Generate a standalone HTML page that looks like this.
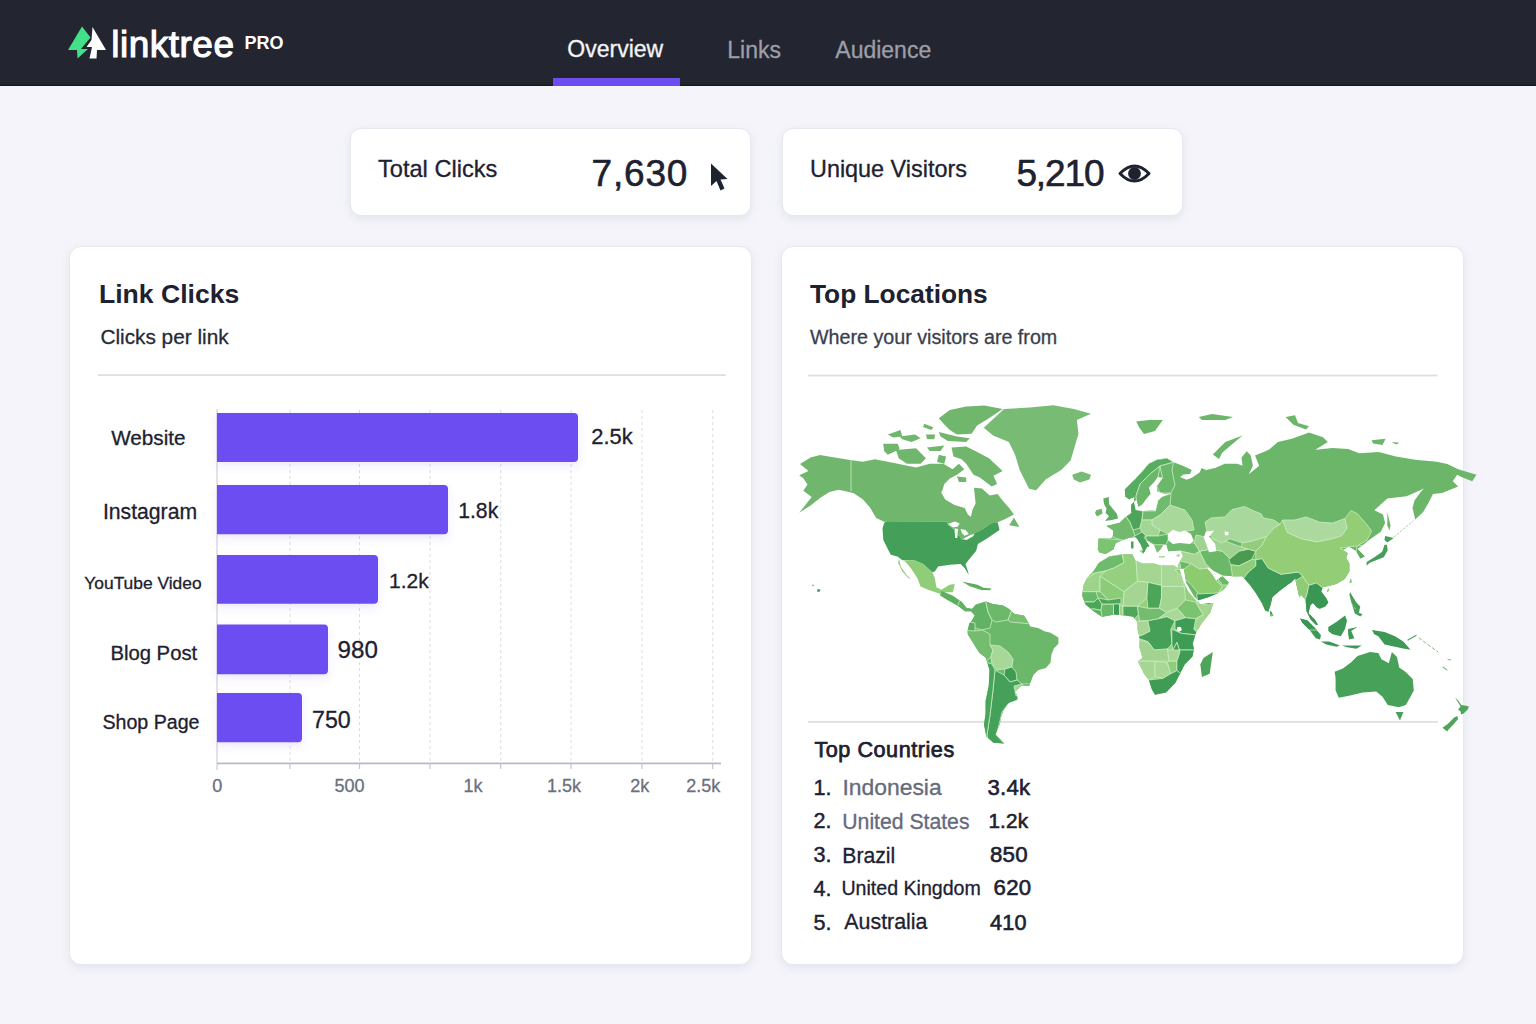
<!DOCTYPE html>
<html><head><meta charset="utf-8"><style>
html,body{margin:0;padding:0;}
body{width:1536px;height:1024px;overflow:hidden;position:relative;background:#f4f4fa;font-family:"Liberation Sans",sans-serif;}
.t{position:absolute;line-height:1;white-space:nowrap;}
.nav{position:absolute;left:0;top:0;width:1536px;height:86px;background:#232631;box-shadow:inset 0 -1.5px 0 #161820;}
.card{position:absolute;background:#ffffff;border-radius:12px;border:1px solid #e8e8ef;box-shadow:0 3px 8px rgba(90,90,140,0.10);box-sizing:border-box;}
svg{position:absolute;left:0;top:0;}
</style></head><body>
<div class="nav"></div>
<div style="position:absolute;left:553px;top:78px;width:127px;height:8px;background:#6d4cf0;"></div>
<div class="card" style="left:350px;top:128px;width:401px;height:88px;border-radius:11px;"></div>
<div class="card" style="left:782px;top:128px;width:401px;height:88px;border-radius:11px;"></div>
<div class="card" style="left:69px;top:246px;width:683px;height:719px;"></div>
<div class="card" style="left:781px;top:246px;width:683px;height:719px;"></div>
<svg width="1536" height="1024" viewBox="0 0 1536 1024">
<defs><filter id="bs" x="-10%" y="-30%" width="120%" height="170%"><feDropShadow dx="0" dy="4" stdDeviation="4" flood-color="#6c4df2" flood-opacity="0.12"/></filter></defs>
<!-- logo -->
<path d="M82 26.5 L90.5 37.5 L81 49 L88 49 L77.5 58.5 L77 50 L68 50 Z" fill="#43e08a"/>
<path d="M92.5 27 L106 50 L97 50 L96.5 58.5 L89.5 58.5 L92 47 L86.5 47 L91.5 40 Z" fill="#ffffff"/>
<!-- cursor -->
<path d="M711 163.5 L711 186 L716.5 181 L720.5 190.5 L724.5 188.5 L720.5 179.5 L727.5 179 Z" fill="#1f2330"/>
<!-- eye -->
<path d="M1120 173.5 Q1134.5 158.3 1149 173.5 Q1134.5 188.7 1120 173.5 Z" fill="none" stroke="#1f2330" stroke-width="3" stroke-linejoin="round"/>
<circle cx="1134.5" cy="173.5" r="6.4" fill="#1f2330"/>
<!-- dividers -->
<rect x="98" y="374.2" width="627.6" height="1.8" fill="#dedee4"/>
<rect x="808" y="374.6" width="629.5" height="1.8" fill="#dedee4"/>
<rect x="808" y="721" width="629.8" height="1.8" fill="#dedee4"/>
<!-- chart -->
<line x1="290" y1="410" x2="290" y2="763" stroke="#dcdce4" stroke-width="1" stroke-dasharray="3 3"/><line x1="290" y1="763" x2="290" y2="769" stroke="#c4c5cf" stroke-width="1.2"/><line x1="359.5" y1="410" x2="359.5" y2="763" stroke="#dcdce4" stroke-width="1" stroke-dasharray="3 3"/><line x1="359.5" y1="763" x2="359.5" y2="769" stroke="#c4c5cf" stroke-width="1.2"/><line x1="430" y1="410" x2="430" y2="763" stroke="#dcdce4" stroke-width="1" stroke-dasharray="3 3"/><line x1="430" y1="763" x2="430" y2="769" stroke="#c4c5cf" stroke-width="1.2"/><line x1="500.7" y1="410" x2="500.7" y2="763" stroke="#dcdce4" stroke-width="1" stroke-dasharray="3 3"/><line x1="500.7" y1="763" x2="500.7" y2="769" stroke="#c4c5cf" stroke-width="1.2"/><line x1="571" y1="410" x2="571" y2="763" stroke="#dcdce4" stroke-width="1" stroke-dasharray="3 3"/><line x1="571" y1="763" x2="571" y2="769" stroke="#c4c5cf" stroke-width="1.2"/><line x1="642" y1="410" x2="642" y2="763" stroke="#dcdce4" stroke-width="1" stroke-dasharray="3 3"/><line x1="642" y1="763" x2="642" y2="769" stroke="#c4c5cf" stroke-width="1.2"/><line x1="712.7" y1="410" x2="712.7" y2="763" stroke="#dcdce4" stroke-width="1" stroke-dasharray="3 3"/><line x1="712.7" y1="763" x2="712.7" y2="769" stroke="#c4c5cf" stroke-width="1.2"/>
<line x1="217" y1="409" x2="217" y2="770" stroke="#cfd0d8" stroke-width="1.2"/>
<rect x="217" y="762.5" width="504" height="1.8" fill="#babbc7"/>
<path d="M217 413 H574 Q578 413 578 417 V458 Q578 462 574 462 H217 Z" fill="#6c4df2" filter="url(#bs)"/><path d="M217 485 H444 Q448 485 448 489 V530.2 Q448 534.2 444 534.2 H217 Z" fill="#6c4df2" filter="url(#bs)"/><path d="M217 555 H374 Q378 555 378 559 V599.8 Q378 603.8 374 603.8 H217 Z" fill="#6c4df2" filter="url(#bs)"/><path d="M217 624.6 H324 Q328 624.6 328 628.6 V670.2 Q328 674.2 324 674.2 H217 Z" fill="#6c4df2" filter="url(#bs)"/><path d="M217 693 H298 Q302 693 302 697 V738.3 Q302 742.3 298 742.3 H217 Z" fill="#6c4df2" filter="url(#bs)"/>
<clipPath id="land"><path d="M800.0 464.0 L810.6 457.5 L820.0 455.0 L834.6 457.5 L850.2 460.0 L862.7 461.7 L875.0 459.2 L897.8 463.8 L916.0 467.5 L929.7 463.8 L943.4 463.8 L952.5 469.3 L958.9 463.8 L964.3 469.3 L957.0 474.8 L949.8 478.4 L944.3 483.9 L942.5 490.0 L941.2 492.5 L945.2 499.5 L954.5 505.0 L964.7 508.1 L967.8 514.4 L970.9 516.7 L972.5 509.7 L975.6 503.4 L974.0 487.8 L981.9 488.6 L989.7 495.6 L997.5 494.0 L1003.8 501.9 L1009.2 508.1 L1013.9 514.4 L1005.3 519.0 L995.9 523.0 L991.2 523.3 L982.9 529.1 L972.9 534.1 L968.0 537.4 L962.1 539.9 L958.8 534.9 L955.5 538.2 L954.7 530.0 L948.0 525.0 L947.2 521.6 L885.8 521.2 L884.6 522.1 L876.2 517.9 L870.0 507.5 L862.7 499.2 L853.3 492.9 L838.8 489.8 L829.4 491.9 L820.0 498.1 L810.6 505.4 L799.2 512.7 L811.7 497.1 L803.3 490.8 L807.5 484.6 L803.3 478.3 L799.2 475.2 L808.5 471.0 Z M1009.2 525.3 L1013.9 517.5 L1019.4 526.9 Z M885.8 521.2 L947.2 521.6 L948.0 525.0 L954.7 530.0 L955.5 538.2 L958.8 534.9 L962.1 539.9 L968.0 537.4 L972.9 534.1 L982.9 529.1 L991.2 523.3 L997.8 522.5 L999.5 530.0 L986.2 539.1 L977.9 544.0 L976.2 550.7 L968.8 559.8 L965.5 564.0 L968.0 571.4 L968.8 574.8 L964.6 568.1 L960.5 564.0 L949.7 564.8 L938.1 566.5 L934.8 571.4 L932.3 572.3 L923.1 564.0 L914.8 560.6 L902.4 560.2 L897.4 556.5 L890.8 554.8 L887.4 548.2 L883.3 539.9 L882.5 528.3 L884.1 523.3 Z M904.0 560.6 L914.8 560.6 L923.1 564.0 L932.3 572.3 L934.8 578.1 L936.4 587.2 L941.4 589.7 L949.7 584.7 L954.7 583.9 L953.0 592.2 L946.4 592.2 L939.7 593.8 L928.1 589.7 L920.6 586.4 L917.3 578.1 L910.7 568.1 L906.5 563.1 Z M899.0 558.2 L900.7 566.5 L906.5 574.8 L910.7 578.9 L908.2 578.1 L902.4 571.4 L898.2 563.1 Z M941.6 590.9 L952.5 595.6 L961.9 601.9 L966.6 608.1 L972.8 608.9 L974.4 611.2 L965.0 611.2 L958.8 606.6 L947.8 600.3 L940.0 595.6 Z M961.9 581.6 L977.5 584.7 L986.9 589.4 L982.2 590.2 L969.7 586.2 Z M983.8 587.8 L991.6 588.6 L990.0 590.2 L983.0 590.0 Z M938.8 418.2 L949.8 410.0 L966.2 406.4 L984.4 405.5 L1002.6 409.1 L989.0 418.2 L977.1 425.5 L971.6 433.7 L957.0 434.6 L949.8 430.0 L944.3 424.6 Z M938.8 431.9 L957.0 436.5 L969.8 438.3 L966.2 441.9 L947.9 441.0 L940.6 436.5 Z M887.8 434.6 L900.5 430.0 L902.3 436.5 L893.2 437.4 Z M899.6 436.5 L915.1 434.6 L920.6 438.3 L911.5 441.9 L902.3 439.2 Z M924.2 423.7 L933.3 427.3 L931.5 430.0 L923.0 427.0 Z M926.0 434.6 L935.2 434.6 L934.2 439.2 L927.0 439.0 Z M883.2 443.8 L897.8 443.8 L899.6 449.2 L887.8 454.7 L884.1 451.0 Z M896.0 450.1 L916.0 448.3 L926.0 458.3 L920.6 463.8 L906.9 463.8 L898.7 458.3 Z M927.0 447.4 L944.3 445.6 L940.6 451.0 L929.7 451.0 Z M938.8 454.7 L946.1 456.5 L944.3 463.8 L937.0 462.0 Z M951.6 447.4 L966.2 446.5 L975.3 451.0 L989.0 458.3 L1002.6 471.1 L993.5 475.7 L997.1 483.9 L991.7 486.6 L979.8 477.5 L973.5 474.8 L966.2 463.8 L961.6 459.2 L953.4 456.5 Z M957.0 476.6 L966.2 477.5 L966.2 482.0 L958.9 482.0 Z M983.8 427.8 L1004.0 409.0 L1030.0 407.5 L1053.4 405.2 L1073.8 409.0 L1091.0 413.8 L1076.9 420.0 L1078.4 434.0 L1073.8 449.7 L1070.6 460.6 L1061.2 470.0 L1045.6 479.4 L1036.2 490.3 L1029.0 488.8 L1019.7 470.0 L1015.0 454.4 L1008.8 441.9 L993.1 435.6 Z M1072.2 474.7 L1081.6 471.6 L1091.0 474.7 L1089.4 479.4 L1080.0 482.5 L1073.8 479.4 Z M1136.2 421.6 L1148.8 420.0 L1162.8 420.0 L1155.0 431.0 L1144.0 434.0 L1139.4 427.8 Z M1212.8 454.4 L1225.3 441.9 L1242.5 435.6 L1233.0 443.4 L1222.2 452.8 L1219.0 459.0 Z M1103.3 498.6 L1108.8 497.0 L1109.0 504.0 L1113.0 509.0 L1117.0 514.0 L1118.0 518.5 L1112.0 520.0 L1105.0 521.0 L1109.0 516.0 L1105.5 513.0 L1106.5 508.5 L1104.0 504.0 Z M1096.2 510.3 L1101.7 508.8 L1102.5 513.4 L1097.0 516.6 L1095.0 513.0 Z M1099.4 552.5 L1097.8 549.4 L1098.6 538.4 L1110.0 538.6 L1112.7 536.9 L1113.4 530.6 L1106.4 526.0 L1119.7 522.8 L1126.0 516.6 L1131.0 513.0 L1131.3 504.5 L1133.9 501.9 L1134.5 496.7 L1129.3 499.3 L1125.4 496.7 L1124.8 489.5 L1134.5 479.7 L1142.3 471.3 L1148.9 463.5 L1157.3 459.6 L1167.0 458.2 L1173.6 462.2 L1183.4 466.0 L1191.8 470.0 L1189.9 473.9 L1183.4 474.5 L1180.1 477.1 L1186.6 479.7 L1191.8 477.8 L1199.6 472.6 L1201.6 468.0 L1206.1 470.0 L1215.0 468.0 L1224.8 463.8 L1237.3 463.8 L1242.5 465.8 L1241.5 457.5 L1246.7 451.2 L1250.8 455.4 L1252.9 465.8 L1248.8 474.2 L1259.2 465.8 L1255.0 455.4 L1265.4 451.2 L1269.6 449.2 L1277.8 441.9 L1291.9 438.8 L1309.0 432.5 L1323.1 437.2 L1327.8 441.9 L1315.3 449.7 L1332.5 448.1 L1348.1 448.9 L1359.3 453.2 L1378.7 452.1 L1395.9 456.4 L1415.2 459.7 L1436.7 461.8 L1447.4 464.0 L1458.2 469.3 L1476.5 474.7 L1472.2 481.2 L1461.4 476.9 L1457.1 474.7 L1452.8 481.2 L1458.2 486.5 L1442.1 493.0 L1433.0 494.0 L1428.0 503.7 L1423.0 512.3 L1415.2 519.5 L1412.5 508.0 L1414.5 500.6 L1420.7 492.0 L1424.0 488.5 L1406.6 496.2 L1387.3 498.4 L1374.4 510.2 L1383.0 514.5 L1385.1 523.1 L1380.8 531.7 L1370.1 539.2 L1363.6 544.6 L1357.2 548.8 L1364.7 556.4 L1360.4 558.5 L1356.1 551.0 L1348.6 546.7 L1343.2 550.0 L1347.8 553.3 L1346.2 558.0 L1349.4 563.4 L1349.4 571.2 L1344.7 579.0 L1336.9 583.8 L1329.0 586.1 L1322.8 586.9 L1321.2 591.6 L1326.0 597.8 L1328.3 602.5 L1325.2 606.4 L1319.7 608.8 L1316.6 607.2 L1313.0 603.0 L1310.5 605.0 L1308.5 613.3 L1314.8 619.6 L1318.0 624.8 L1315.8 624.8 L1310.6 619.6 L1306.5 611.2 L1305.6 600.0 L1301.0 594.7 L1299.4 597.8 L1296.2 583.8 L1295.4 578.3 L1291.2 582.5 L1288.0 584.6 L1279.8 590.8 L1272.5 597.0 L1270.4 605.4 L1268.3 611.7 L1265.2 610.6 L1262.0 603.3 L1255.8 593.0 L1249.6 584.6 L1242.3 576.2 L1233.0 576.2 L1222.5 575.2 L1214.0 571.0 L1210.0 568.0 L1205.8 567.0 L1212.0 574.2 L1216.2 580.4 L1222.5 576.2 L1228.8 582.5 L1224.6 588.8 L1218.3 593.0 L1209.0 597.0 L1198.5 600.2 L1194.4 597.0 L1186.0 582.5 L1184.0 569.0 L1179.2 568.8 L1177.7 565.8 L1180.0 561.0 L1183.0 556.5 L1180.8 550.2 L1168.3 551.2 L1166.6 544.7 L1163.4 544.7 L1160.3 549.4 L1157.2 552.5 L1154.0 544.7 L1146.2 540.0 L1144.0 537.5 L1149.4 546.2 L1147.0 547.0 L1143.9 552.5 L1140.8 544.7 L1136.9 538.4 L1135.3 536.9 L1129.0 537.7 L1121.2 540.8 L1115.8 543.0 L1113.4 549.4 L1105.6 554.0 Z M1099.0 562.5 L1109.4 556.2 L1121.9 554.2 L1132.3 554.2 L1135.4 560.4 L1142.7 563.5 L1154.2 563.5 L1160.4 565.6 L1174.0 565.6 L1179.2 568.8 L1183.3 581.2 L1188.5 591.7 L1194.8 599.0 L1200.0 604.2 L1213.5 603.1 L1210.4 612.5 L1202.0 622.9 L1195.8 633.3 L1192.7 643.8 L1194.0 648.8 L1192.5 656.6 L1184.7 664.4 L1180.0 673.8 L1175.3 683.1 L1166.0 692.5 L1155.0 694.8 L1151.9 689.4 L1148.8 680.0 L1144.0 673.8 L1137.8 661.2 L1142.5 658.0 L1139.4 647.2 L1139.6 638.5 L1137.5 629.2 L1137.5 622.9 L1133.3 616.7 L1125.0 615.6 L1114.6 614.6 L1102.0 616.7 L1092.7 610.4 L1085.4 604.2 L1082.3 595.8 L1083.3 585.4 L1087.5 577.0 L1093.8 570.8 Z M1212.8 651.9 L1209.7 673.8 L1201.9 676.9 L1200.3 664.4 L1203.4 658.0 Z M1270.4 610.6 L1273.5 615.8 L1270.0 616.5 Z M1350.9 578.3 L1351.7 582.2 L1349.4 583.0 Z M1328.3 587.7 L1329.0 590.8 L1326.7 592.3 Z M1386.9 544.7 L1387.7 550.2 L1383.8 557.2 L1376.0 560.3 L1369.7 562.7 L1366.6 565.8 L1366.6 561.9 L1374.4 557.2 L1382.2 551.7 L1384.5 544.7 Z M1385.1 536.0 L1393.7 538.1 L1387.3 542.4 L1384.5 540.0 Z M1387.3 512.3 L1390.5 525.2 L1389.4 530.6 L1387.3 525.2 Z M1350.2 592.3 L1352.5 596.2 L1356.4 602.5 L1360.3 606.4 L1358.8 612.7 L1362.7 614.2 L1360.3 616.6 L1354.8 613.4 L1351.0 601.0 L1349.4 594.7 Z M1300.2 618.5 L1307.5 620.6 L1315.8 629.0 L1321.0 635.2 L1320.0 639.4 L1315.8 638.3 L1309.6 630.0 L1302.3 622.7 Z M1321.0 641.5 L1329.4 641.5 L1339.8 645.6 L1336.7 646.7 L1326.2 644.6 Z M1341.9 645.6 L1353.3 645.6 L1361.7 645.6 L1356.5 648.8 L1347.0 647.2 Z M1328.3 626.9 L1336.7 621.7 L1345.0 615.4 L1347.0 620.6 L1345.0 629.0 L1340.8 636.2 L1332.5 634.2 L1328.3 631.0 Z M1348.1 629.0 L1357.5 626.9 L1351.2 631.0 L1354.4 638.3 L1349.2 639.4 L1348.1 634.2 Z M1372.0 630.0 L1384.6 632.1 L1395.0 636.2 L1403.3 641.5 L1410.6 649.8 L1404.4 648.8 L1395.0 646.7 L1384.6 644.6 L1378.3 636.2 L1374.2 634.2 Z M1334.6 671.7 L1342.9 668.5 L1351.2 662.3 L1357.5 656.0 L1370.0 651.9 L1378.3 652.9 L1381.5 659.2 L1388.8 663.3 L1391.9 651.9 L1397.0 657.1 L1399.2 667.5 L1405.4 671.7 L1412.7 679.0 L1413.8 690.4 L1411.2 695.6 L1405.8 705.0 L1398.8 707.3 L1387.8 705.0 L1382.5 696.7 L1376.2 691.5 L1362.7 692.5 L1350.2 695.6 L1338.8 697.7 L1335.6 690.4 L1335.6 677.9 Z M1395.6 712.0 L1403.4 712.0 L1400.0 720.6 Z M1455.0 697.2 L1458.1 700.3 L1461.2 705.0 L1466.0 705.8 L1469.0 706.6 L1467.5 709.7 L1463.6 713.6 L1461.2 714.4 L1460.5 711.2 L1458.1 709.7 L1460.5 706.6 L1457.3 701.1 Z M1457.3 716.0 L1458.1 719.0 L1453.4 724.5 L1448.8 729.2 L1447.2 731.6 L1442.5 727.7 L1448.0 723.8 L1454.2 717.5 Z M960.0 606.2 L967.8 609.4 L971.7 609.4 L975.6 604.7 L985.8 601.6 L992.8 603.9 L1003.0 605.5 L1008.4 608.6 L1014.7 614.0 L1024.0 615.6 L1028.0 621.9 L1030.3 626.6 L1038.1 628.1 L1044.4 631.2 L1050.6 632.8 L1058.4 637.5 L1058.4 643.8 L1053.8 648.4 L1051.4 654.7 L1050.6 662.5 L1045.9 668.0 L1038.1 670.3 L1033.4 675.0 L1029.4 685.6 L1021.6 685.6 L1014.5 691.9 L1016.9 695.0 L1017.7 699.7 L1009.0 702.8 L1007.5 704.4 L1003.6 710.6 L1001.2 716.9 L999.7 724.7 L995.8 734.0 L1004.4 743.4 L993.4 742.7 L986.4 736.4 L984.0 724.7 L985.6 713.8 L985.6 701.2 L988.8 685.6 L989.5 670.0 L985.8 657.8 L979.5 653.1 L975.6 646.9 L971.7 640.6 L967.8 634.4 L967.8 629.7 L969.4 623.4 L971.0 621.9 L974.8 615.6 L969.4 609.4 Z M1285.6 416.9 L1295.0 415.3 L1298.0 423.0 L1309.0 426.2 L1306.0 429.4 L1293.4 424.7 Z M1371.6 440.3 L1385.6 438.8 L1382.5 445.0 L1373.0 443.4 Z M1391.9 441.9 L1399.7 442.7 L1396.0 444.5 Z M1198.8 416.9 L1212.0 414.0 L1233.0 416.9 L1225.3 420.0 L1201.9 420.0 Z M1131.0 541.5 L1133.5 541.5 L1133.5 548.5 L1131.0 548.5 Z M1139.5 550.5 L1145.0 551.0 L1143.0 553.5 Z M1159.0 556.0 L1165.0 556.0 L1164.0 557.3 L1159.0 557.3 Z M1176.0 555.0 L1180.0 554.6 L1178.5 557.0 Z M817.5 589.0 L820.5 589.5 L819.5 592.0 L817.0 591.5 Z M812.0 584.5 L814.0 585.0 L813.0 586.5 Z"/></clipPath>
<path d="M800.0 464.0 L810.6 457.5 L820.0 455.0 L834.6 457.5 L850.2 460.0 L862.7 461.7 L875.0 459.2 L897.8 463.8 L916.0 467.5 L929.7 463.8 L943.4 463.8 L952.5 469.3 L958.9 463.8 L964.3 469.3 L957.0 474.8 L949.8 478.4 L944.3 483.9 L942.5 490.0 L941.2 492.5 L945.2 499.5 L954.5 505.0 L964.7 508.1 L967.8 514.4 L970.9 516.7 L972.5 509.7 L975.6 503.4 L974.0 487.8 L981.9 488.6 L989.7 495.6 L997.5 494.0 L1003.8 501.9 L1009.2 508.1 L1013.9 514.4 L1005.3 519.0 L995.9 523.0 L991.2 523.3 L982.9 529.1 L972.9 534.1 L968.0 537.4 L962.1 539.9 L958.8 534.9 L955.5 538.2 L954.7 530.0 L948.0 525.0 L947.2 521.6 L885.8 521.2 L884.6 522.1 L876.2 517.9 L870.0 507.5 L862.7 499.2 L853.3 492.9 L838.8 489.8 L829.4 491.9 L820.0 498.1 L810.6 505.4 L799.2 512.7 L811.7 497.1 L803.3 490.8 L807.5 484.6 L803.3 478.3 L799.2 475.2 L808.5 471.0 Z" fill="#70b66d"/>
<path d="M1009.2 525.3 L1013.9 517.5 L1019.4 526.9 Z" fill="#70b66d"/>
<path d="M885.8 521.2 L947.2 521.6 L948.0 525.0 L954.7 530.0 L955.5 538.2 L958.8 534.9 L962.1 539.9 L968.0 537.4 L972.9 534.1 L982.9 529.1 L991.2 523.3 L997.8 522.5 L999.5 530.0 L986.2 539.1 L977.9 544.0 L976.2 550.7 L968.8 559.8 L965.5 564.0 L968.0 571.4 L968.8 574.8 L964.6 568.1 L960.5 564.0 L949.7 564.8 L938.1 566.5 L934.8 571.4 L932.3 572.3 L923.1 564.0 L914.8 560.6 L902.4 560.2 L897.4 556.5 L890.8 554.8 L887.4 548.2 L883.3 539.9 L882.5 528.3 L884.1 523.3 Z" fill="#44a058"/>
<path d="M904.0 560.6 L914.8 560.6 L923.1 564.0 L932.3 572.3 L934.8 578.1 L936.4 587.2 L941.4 589.7 L949.7 584.7 L954.7 583.9 L953.0 592.2 L946.4 592.2 L939.7 593.8 L928.1 589.7 L920.6 586.4 L917.3 578.1 L910.7 568.1 L906.5 563.1 Z" fill="#8fcd78"/>
<path d="M899.0 558.2 L900.7 566.5 L906.5 574.8 L910.7 578.9 L908.2 578.1 L902.4 571.4 L898.2 563.1 Z" fill="#8fcd78"/>
<path d="M941.6 590.9 L952.5 595.6 L961.9 601.9 L966.6 608.1 L972.8 608.9 L974.4 611.2 L965.0 611.2 L958.8 606.6 L947.8 600.3 L940.0 595.6 Z" fill="#5eae60"/>
<path d="M961.9 581.6 L977.5 584.7 L986.9 589.4 L982.2 590.2 L969.7 586.2 Z" fill="#5eae60"/>
<path d="M983.8 587.8 L991.6 588.6 L990.0 590.2 L983.0 590.0 Z" fill="#5eae60"/>
<path d="M938.8 418.2 L949.8 410.0 L966.2 406.4 L984.4 405.5 L1002.6 409.1 L989.0 418.2 L977.1 425.5 L971.6 433.7 L957.0 434.6 L949.8 430.0 L944.3 424.6 Z" fill="#70b66d"/>
<path d="M938.8 431.9 L957.0 436.5 L969.8 438.3 L966.2 441.9 L947.9 441.0 L940.6 436.5 Z" fill="#70b66d"/>
<path d="M887.8 434.6 L900.5 430.0 L902.3 436.5 L893.2 437.4 Z" fill="#70b66d"/>
<path d="M899.6 436.5 L915.1 434.6 L920.6 438.3 L911.5 441.9 L902.3 439.2 Z" fill="#70b66d"/>
<path d="M924.2 423.7 L933.3 427.3 L931.5 430.0 L923.0 427.0 Z" fill="#70b66d"/>
<path d="M926.0 434.6 L935.2 434.6 L934.2 439.2 L927.0 439.0 Z" fill="#70b66d"/>
<path d="M883.2 443.8 L897.8 443.8 L899.6 449.2 L887.8 454.7 L884.1 451.0 Z" fill="#70b66d"/>
<path d="M896.0 450.1 L916.0 448.3 L926.0 458.3 L920.6 463.8 L906.9 463.8 L898.7 458.3 Z" fill="#70b66d"/>
<path d="M927.0 447.4 L944.3 445.6 L940.6 451.0 L929.7 451.0 Z" fill="#70b66d"/>
<path d="M938.8 454.7 L946.1 456.5 L944.3 463.8 L937.0 462.0 Z" fill="#70b66d"/>
<path d="M951.6 447.4 L966.2 446.5 L975.3 451.0 L989.0 458.3 L1002.6 471.1 L993.5 475.7 L997.1 483.9 L991.7 486.6 L979.8 477.5 L973.5 474.8 L966.2 463.8 L961.6 459.2 L953.4 456.5 Z" fill="#70b66d"/>
<path d="M957.0 476.6 L966.2 477.5 L966.2 482.0 L958.9 482.0 Z" fill="#70b66d"/>
<path d="M983.8 427.8 L1004.0 409.0 L1030.0 407.5 L1053.4 405.2 L1073.8 409.0 L1091.0 413.8 L1076.9 420.0 L1078.4 434.0 L1073.8 449.7 L1070.6 460.6 L1061.2 470.0 L1045.6 479.4 L1036.2 490.3 L1029.0 488.8 L1019.7 470.0 L1015.0 454.4 L1008.8 441.9 L993.1 435.6 Z" fill="#78bb74"/>
<path d="M1072.2 474.7 L1081.6 471.6 L1091.0 474.7 L1089.4 479.4 L1080.0 482.5 L1073.8 479.4 Z" fill="#78bb74"/>
<path d="M1136.2 421.6 L1148.8 420.0 L1162.8 420.0 L1155.0 431.0 L1144.0 434.0 L1139.4 427.8 Z" fill="#6cb66a"/>
<path d="M1212.8 454.4 L1225.3 441.9 L1242.5 435.6 L1233.0 443.4 L1222.2 452.8 L1219.0 459.0 Z" fill="#6cb66a"/>
<path d="M1103.3 498.6 L1108.8 497.0 L1109.0 504.0 L1113.0 509.0 L1117.0 514.0 L1118.0 518.5 L1112.0 520.0 L1105.0 521.0 L1109.0 516.0 L1105.5 513.0 L1106.5 508.5 L1104.0 504.0 Z" fill="#5fae62"/>
<path d="M1096.2 510.3 L1101.7 508.8 L1102.5 513.4 L1097.0 516.6 L1095.0 513.0 Z" fill="#6cb86a"/>
<path d="M1099.4 552.5 L1097.8 549.4 L1098.6 538.4 L1110.0 538.6 L1112.7 536.9 L1113.4 530.6 L1106.4 526.0 L1119.7 522.8 L1126.0 516.6 L1131.0 513.0 L1131.3 504.5 L1133.9 501.9 L1134.5 496.7 L1129.3 499.3 L1125.4 496.7 L1124.8 489.5 L1134.5 479.7 L1142.3 471.3 L1148.9 463.5 L1157.3 459.6 L1167.0 458.2 L1173.6 462.2 L1183.4 466.0 L1191.8 470.0 L1189.9 473.9 L1183.4 474.5 L1180.1 477.1 L1186.6 479.7 L1191.8 477.8 L1199.6 472.6 L1201.6 468.0 L1206.1 470.0 L1215.0 468.0 L1224.8 463.8 L1237.3 463.8 L1242.5 465.8 L1241.5 457.5 L1246.7 451.2 L1250.8 455.4 L1252.9 465.8 L1248.8 474.2 L1259.2 465.8 L1255.0 455.4 L1265.4 451.2 L1269.6 449.2 L1277.8 441.9 L1291.9 438.8 L1309.0 432.5 L1323.1 437.2 L1327.8 441.9 L1315.3 449.7 L1332.5 448.1 L1348.1 448.9 L1359.3 453.2 L1378.7 452.1 L1395.9 456.4 L1415.2 459.7 L1436.7 461.8 L1447.4 464.0 L1458.2 469.3 L1476.5 474.7 L1472.2 481.2 L1461.4 476.9 L1457.1 474.7 L1452.8 481.2 L1458.2 486.5 L1442.1 493.0 L1433.0 494.0 L1428.0 503.7 L1423.0 512.3 L1415.2 519.5 L1412.5 508.0 L1414.5 500.6 L1420.7 492.0 L1424.0 488.5 L1406.6 496.2 L1387.3 498.4 L1374.4 510.2 L1383.0 514.5 L1385.1 523.1 L1380.8 531.7 L1370.1 539.2 L1363.6 544.6 L1357.2 548.8 L1364.7 556.4 L1360.4 558.5 L1356.1 551.0 L1348.6 546.7 L1343.2 550.0 L1347.8 553.3 L1346.2 558.0 L1349.4 563.4 L1349.4 571.2 L1344.7 579.0 L1336.9 583.8 L1329.0 586.1 L1322.8 586.9 L1321.2 591.6 L1326.0 597.8 L1328.3 602.5 L1325.2 606.4 L1319.7 608.8 L1316.6 607.2 L1313.0 603.0 L1310.5 605.0 L1308.5 613.3 L1314.8 619.6 L1318.0 624.8 L1315.8 624.8 L1310.6 619.6 L1306.5 611.2 L1305.6 600.0 L1301.0 594.7 L1299.4 597.8 L1296.2 583.8 L1295.4 578.3 L1291.2 582.5 L1288.0 584.6 L1279.8 590.8 L1272.5 597.0 L1270.4 605.4 L1268.3 611.7 L1265.2 610.6 L1262.0 603.3 L1255.8 593.0 L1249.6 584.6 L1242.3 576.2 L1233.0 576.2 L1222.5 575.2 L1214.0 571.0 L1210.0 568.0 L1205.8 567.0 L1212.0 574.2 L1216.2 580.4 L1222.5 576.2 L1228.8 582.5 L1224.6 588.8 L1218.3 593.0 L1209.0 597.0 L1198.5 600.2 L1194.4 597.0 L1186.0 582.5 L1184.0 569.0 L1179.2 568.8 L1177.7 565.8 L1180.0 561.0 L1183.0 556.5 L1180.8 550.2 L1168.3 551.2 L1166.6 544.7 L1163.4 544.7 L1160.3 549.4 L1157.2 552.5 L1154.0 544.7 L1146.2 540.0 L1144.0 537.5 L1149.4 546.2 L1147.0 547.0 L1143.9 552.5 L1140.8 544.7 L1136.9 538.4 L1135.3 536.9 L1129.0 537.7 L1121.2 540.8 L1115.8 543.0 L1113.4 549.4 L1105.6 554.0 Z" fill="#6cb66a"/>
<path d="M1099.0 562.5 L1109.4 556.2 L1121.9 554.2 L1132.3 554.2 L1135.4 560.4 L1142.7 563.5 L1154.2 563.5 L1160.4 565.6 L1174.0 565.6 L1179.2 568.8 L1183.3 581.2 L1188.5 591.7 L1194.8 599.0 L1200.0 604.2 L1213.5 603.1 L1210.4 612.5 L1202.0 622.9 L1195.8 633.3 L1192.7 643.8 L1194.0 648.8 L1192.5 656.6 L1184.7 664.4 L1180.0 673.8 L1175.3 683.1 L1166.0 692.5 L1155.0 694.8 L1151.9 689.4 L1148.8 680.0 L1144.0 673.8 L1137.8 661.2 L1142.5 658.0 L1139.4 647.2 L1139.6 638.5 L1137.5 629.2 L1137.5 622.9 L1133.3 616.7 L1125.0 615.6 L1114.6 614.6 L1102.0 616.7 L1092.7 610.4 L1085.4 604.2 L1082.3 595.8 L1083.3 585.4 L1087.5 577.0 L1093.8 570.8 Z" fill="#94d07f"/>
<path d="M1212.8 651.9 L1209.7 673.8 L1201.9 676.9 L1200.3 664.4 L1203.4 658.0 Z" fill="#4ea55a"/>
<path d="M1270.4 610.6 L1273.5 615.8 L1270.0 616.5 Z" fill="#3d9955"/>
<path d="M1350.9 578.3 L1351.7 582.2 L1349.4 583.0 Z" fill="#5aae5e"/>
<path d="M1328.3 587.7 L1329.0 590.8 L1326.7 592.3 Z" fill="#93cd76"/>
<path d="M1386.9 544.7 L1387.7 550.2 L1383.8 557.2 L1376.0 560.3 L1369.7 562.7 L1366.6 565.8 L1366.6 561.9 L1374.4 557.2 L1382.2 551.7 L1384.5 544.7 Z" fill="#44a058"/>
<path d="M1385.1 536.0 L1393.7 538.1 L1387.3 542.4 L1384.5 540.0 Z" fill="#44a058"/>
<path d="M1387.3 512.3 L1390.5 525.2 L1389.4 530.6 L1387.3 525.2 Z" fill="#6cb66a"/>
<path d="M1350.2 592.3 L1352.5 596.2 L1356.4 602.5 L1360.3 606.4 L1358.8 612.7 L1362.7 614.2 L1360.3 616.6 L1354.8 613.4 L1351.0 601.0 L1349.4 594.7 Z" fill="#44a058"/>
<path d="M1300.2 618.5 L1307.5 620.6 L1315.8 629.0 L1321.0 635.2 L1320.0 639.4 L1315.8 638.3 L1309.6 630.0 L1302.3 622.7 Z" fill="#3d9955"/>
<path d="M1321.0 641.5 L1329.4 641.5 L1339.8 645.6 L1336.7 646.7 L1326.2 644.6 Z" fill="#3d9955"/>
<path d="M1341.9 645.6 L1353.3 645.6 L1361.7 645.6 L1356.5 648.8 L1347.0 647.2 Z" fill="#3d9955"/>
<path d="M1328.3 626.9 L1336.7 621.7 L1345.0 615.4 L1347.0 620.6 L1345.0 629.0 L1340.8 636.2 L1332.5 634.2 L1328.3 631.0 Z" fill="#3d9955"/>
<path d="M1348.1 629.0 L1357.5 626.9 L1351.2 631.0 L1354.4 638.3 L1349.2 639.4 L1348.1 634.2 Z" fill="#3d9955"/>
<path d="M1372.0 630.0 L1384.6 632.1 L1395.0 636.2 L1403.3 641.5 L1410.6 649.8 L1404.4 648.8 L1395.0 646.7 L1384.6 644.6 L1378.3 636.2 L1374.2 634.2 Z" fill="#3d9955"/>
<path d="M1334.6 671.7 L1342.9 668.5 L1351.2 662.3 L1357.5 656.0 L1370.0 651.9 L1378.3 652.9 L1381.5 659.2 L1388.8 663.3 L1391.9 651.9 L1397.0 657.1 L1399.2 667.5 L1405.4 671.7 L1412.7 679.0 L1413.8 690.4 L1411.2 695.6 L1405.8 705.0 L1398.8 707.3 L1387.8 705.0 L1382.5 696.7 L1376.2 691.5 L1362.7 692.5 L1350.2 695.6 L1338.8 697.7 L1335.6 690.4 L1335.6 677.9 Z" fill="#47a158"/>
<path d="M1395.6 712.0 L1403.4 712.0 L1400.0 720.6 Z" fill="#47a158"/>
<path d="M1455.0 697.2 L1458.1 700.3 L1461.2 705.0 L1466.0 705.8 L1469.0 706.6 L1467.5 709.7 L1463.6 713.6 L1461.2 714.4 L1460.5 711.2 L1458.1 709.7 L1460.5 706.6 L1457.3 701.1 Z" fill="#4ea55a"/>
<path d="M1457.3 716.0 L1458.1 719.0 L1453.4 724.5 L1448.8 729.2 L1447.2 731.6 L1442.5 727.7 L1448.0 723.8 L1454.2 717.5 Z" fill="#4ea55a"/>
<path d="M960.0 606.2 L967.8 609.4 L971.7 609.4 L975.6 604.7 L985.8 601.6 L992.8 603.9 L1003.0 605.5 L1008.4 608.6 L1014.7 614.0 L1024.0 615.6 L1028.0 621.9 L1030.3 626.6 L1038.1 628.1 L1044.4 631.2 L1050.6 632.8 L1058.4 637.5 L1058.4 643.8 L1053.8 648.4 L1051.4 654.7 L1050.6 662.5 L1045.9 668.0 L1038.1 670.3 L1033.4 675.0 L1029.4 685.6 L1021.6 685.6 L1014.5 691.9 L1016.9 695.0 L1017.7 699.7 L1009.0 702.8 L1007.5 704.4 L1003.6 710.6 L1001.2 716.9 L999.7 724.7 L995.8 734.0 L1004.4 743.4 L993.4 742.7 L986.4 736.4 L984.0 724.7 L985.6 713.8 L985.6 701.2 L988.8 685.6 L989.5 670.0 L985.8 657.8 L979.5 653.1 L975.6 646.9 L971.7 640.6 L967.8 634.4 L967.8 629.7 L969.4 623.4 L971.0 621.9 L974.8 615.6 L969.4 609.4 Z" fill="#6cb86b"/>
<path d="M1285.6 416.9 L1295.0 415.3 L1298.0 423.0 L1309.0 426.2 L1306.0 429.4 L1293.4 424.7 Z" fill="#6cb66a"/>
<path d="M1371.6 440.3 L1385.6 438.8 L1382.5 445.0 L1373.0 443.4 Z" fill="#6cb66a"/>
<path d="M1391.9 441.9 L1399.7 442.7 L1396.0 444.5 Z" fill="#6cb66a"/>
<path d="M1198.8 416.9 L1212.0 414.0 L1233.0 416.9 L1225.3 420.0 L1201.9 420.0 Z" fill="#6cb66a"/>
<path d="M1131.0 541.5 L1133.5 541.5 L1133.5 548.5 L1131.0 548.5 Z" fill="#4aa35a"/>
<path d="M1139.5 550.5 L1145.0 551.0 L1143.0 553.5 Z" fill="#4aa35a"/>
<path d="M1159.0 556.0 L1165.0 556.0 L1164.0 557.3 L1159.0 557.3 Z" fill="#79c070"/>
<path d="M1176.0 555.0 L1180.0 554.6 L1178.5 557.0 Z" fill="#79c070"/>
<path d="M817.5 589.0 L820.5 589.5 L819.5 592.0 L817.0 591.5 Z" fill="#44a058"/>
<path d="M812.0 584.5 L814.0 585.0 L813.0 586.5 Z" fill="#44a058"/>
<g clip-path="url(#land)" stroke="#c9eec0" stroke-width="0.8" stroke-linejoin="round">
<path d="M960.0 600.0 L985.0 598.0 L988.0 612.0 L992.0 620.0 L990.0 628.0 L982.0 630.0 L975.0 628.0 L965.0 625.0 L955.0 612.0 Z" fill="#62b266"/>
<path d="M985.0 598.0 L1003.0 603.0 L1012.0 610.0 L1008.0 620.0 L996.0 622.0 L992.0 620.0 L988.0 612.0 Z" fill="#6db96b"/>
<path d="M1003.0 603.0 L1030.0 612.0 L1032.0 624.0 L1010.0 622.0 L1008.0 620.0 L1012.0 610.0 Z" fill="#78bf72"/>
<path d="M960.0 620.0 L975.0 623.0 L975.0 631.0 L960.0 636.0 Z" fill="#5cad61"/>
<path d="M960.0 630.0 L975.0 631.0 L982.0 630.0 L990.0 634.0 L990.0 645.0 L993.0 650.0 L991.0 657.0 L985.0 662.0 L970.0 660.0 L960.0 640.0 Z" fill="#74bd6e"/>
<path d="M990.0 645.0 L1000.0 646.0 L1008.0 652.0 L1013.0 659.0 L1012.0 667.0 L1005.0 669.0 L997.0 670.0 L992.0 664.0 L991.0 657.0 L993.0 650.0 Z" fill="#a8d898"/>
<path d="M1005.0 669.0 L1012.0 667.0 L1016.0 672.0 L1017.0 680.0 L1010.0 682.0 L1004.0 675.0 Z" fill="#3f9b52"/>
<path d="M995.0 670.0 L1004.0 675.0 L1010.0 682.0 L1017.0 680.0 L1022.0 684.0 L1040.0 684.0 L1022.0 690.0 L1017.0 700.0 L1008.0 704.0 L1002.0 712.0 L999.0 725.0 L996.0 735.0 L1010.0 750.0 L990.0 750.0 L987.0 735.0 L990.0 715.0 L993.0 690.0 Z" fill="#45a05a"/>
<path d="M970.0 660.0 L985.0 662.0 L992.0 664.0 L995.0 670.0 L993.0 690.0 L990.0 715.0 L987.0 735.0 L990.0 750.0 L970.0 750.0 L975.0 700.0 Z" fill="#4aa55c"/>
<path d="M1014.0 686.0 L1022.0 684.0 L1030.0 690.0 L1016.0 696.0 Z" fill="#a7d897"/>
<path d="M1099.0 562.5 L1109.4 556.2 L1121.9 554.2 L1124.0 562.5 L1114.6 567.7 L1106.2 570.8 L1095.8 572.9 L1080.0 574.0 Z" fill="#6ebb6b"/>
<path d="M1075.0 585.4 L1095.8 572.9 L1106.2 570.8 L1100.0 576.0 L1100.0 591.7 L1075.0 592.7 Z" fill="#9dd38b"/>
<path d="M1100.0 576.0 L1124.0 591.7 L1123.0 606.2 L1108.3 600.0 L1100.0 591.7 Z" fill="#8ccc78"/>
<path d="M1106.2 570.8 L1114.6 567.7 L1124.0 562.5 L1121.9 550.0 L1135.4 550.0 L1137.5 581.2 L1124.0 591.7 L1100.0 576.0 Z" fill="#94d07f"/>
<path d="M1135.4 550.0 L1161.5 550.0 L1161.5 585.4 L1147.9 582.3 L1137.5 581.2 Z" fill="#a3d690"/>
<path d="M1161.5 550.0 L1179.2 560.0 L1184.4 586.5 L1161.5 586.5 Z" fill="#a8d896"/>
<path d="M1124.0 591.7 L1137.5 581.2 L1147.9 582.3 L1146.9 598.0 L1137.5 606.2 L1123.0 606.2 Z" fill="#a4d592"/>
<path d="M1147.9 582.3 L1161.5 585.4 L1161.5 598.0 L1159.4 608.3 L1147.9 608.3 L1146.9 598.0 Z" fill="#4da55a"/>
<path d="M1161.5 586.5 L1184.4 586.5 L1185.4 600.0 L1177.0 608.3 L1166.7 612.5 L1159.4 608.3 L1161.5 598.0 Z" fill="#a2d590"/>
<path d="M1185.4 600.0 L1195.8 602.0 L1203.1 614.6 L1195.8 618.8 L1185.4 617.7 L1179.2 610.4 L1177.0 608.3 Z" fill="#7cc36f"/>
<path d="M1195.8 602.0 L1220.0 598.0 L1220.0 612.5 L1195.8 631.2 L1191.7 623.0 L1195.8 618.8 L1203.1 614.6 Z" fill="#a5d690"/>
<path d="M1075.0 591.7 L1100.0 591.7 L1108.3 600.0 L1123.0 606.2 L1123.0 616.7 L1102.0 625.0 L1075.0 615.0 Z" fill="#79c16f"/>
<path d="M1075.0 591.7 L1096.0 591.7 L1098.0 598.0 L1094.0 602.0 L1075.0 602.0 Z" fill="#6cb86a"/>
<path d="M1075.0 602.0 L1094.0 602.0 L1098.0 598.0 L1102.0 604.0 L1101.0 610.4 L1094.0 609.0 L1075.0 610.0 Z" fill="#4da55a"/>
<path d="M1075.0 610.0 L1094.0 609.0 L1101.0 610.4 L1103.0 616.7 L1075.0 625.0 Z" fill="#5aaf60"/>
<path d="M1102.0 604.0 L1113.5 604.0 L1113.5 625.0 L1103.0 625.0 L1101.0 610.4 Z" fill="#6cb86a"/>
<path d="M1098.0 598.0 L1108.3 600.0 L1121.0 598.0 L1121.0 604.0 L1113.5 604.0 L1102.0 604.0 Z" fill="#4ea55a"/>
<path d="M1113.5 604.0 L1119.5 604.0 L1119.5 625.0 L1113.5 625.0 Z" fill="#3f9c55"/>
<path d="M1119.5 604.0 L1123.0 606.2 L1123.0 625.0 L1119.5 625.0 Z" fill="#9fd38d"/>
<path d="M1123.0 606.2 L1137.5 606.2 L1138.5 614.6 L1133.3 620.0 L1123.0 620.0 Z" fill="#4fa75b"/>
<path d="M1137.5 606.2 L1147.9 608.3 L1159.4 608.3 L1166.7 612.5 L1158.3 618.8 L1147.9 620.8 L1139.6 620.8 L1138.5 614.6 Z" fill="#75bd6e"/>
<path d="M1166.7 612.5 L1177.0 608.3 L1179.2 610.4 L1185.4 617.7 L1175.0 620.8 L1166.7 616.7 L1158.3 618.8 Z" fill="#a9d898"/>
<path d="M1125.0 621.9 L1147.9 620.8 L1150.0 631.2 L1141.7 635.4 L1130.0 633.0 Z" fill="#a9d697"/>
<path d="M1147.9 620.8 L1158.3 618.8 L1166.7 616.7 L1175.0 620.8 L1170.8 629.2 L1171.9 643.8 L1166.7 650.0 L1154.2 650.0 L1147.9 641.7 L1135.0 637.0 L1141.7 635.4 L1150.0 631.2 Z" fill="#46a058"/>
<path d="M1175.0 620.8 L1185.4 617.7 L1195.8 618.8 L1193.8 629.2 L1200.0 635.4 L1181.2 633.3 L1175.0 629.2 Z" fill="#3f9c55"/>
<path d="M1171.9 629.2 L1181.2 633.3 L1200.0 635.4 L1200.0 650.0 L1172.9 650.0 L1171.9 643.8 Z" fill="#3f9c55"/>
<path d="M1130.0 639.4 L1147.9 641.7 L1154.2 650.0 L1167.5 648.8 L1169.0 661.2 L1155.0 661.2 L1130.0 661.2 Z" fill="#a3d391"/>
<path d="M1166.7 650.0 L1172.9 650.0 L1176.9 642.5 L1180.0 651.9 L1176.9 661.2 L1169.0 661.2 L1167.5 648.8 Z" fill="#a8d796"/>
<path d="M1130.0 661.2 L1155.0 661.2 L1155.0 676.9 L1148.8 680.0 L1130.0 680.0 Z" fill="#a6d693"/>
<path d="M1155.0 661.2 L1167.5 662.8 L1170.6 673.8 L1162.8 678.4 L1155.0 676.9 Z" fill="#a9d796"/>
<path d="M1169.0 661.2 L1176.9 661.2 L1176.9 670.6 L1170.6 673.8 L1167.5 662.8 Z" fill="#8fcd7c"/>
<path d="M1172.9 650.0 L1200.0 650.0 L1200.0 661.2 L1190.0 680.0 L1180.0 673.8 L1176.9 670.6 L1176.9 661.2 L1180.0 651.9 L1176.9 642.5 Z" fill="#3f9c55"/>
<path d="M1130.0 680.0 L1148.8 680.0 L1162.8 678.4 L1170.6 673.8 L1176.9 670.6 L1190.0 680.0 L1180.0 700.0 L1130.0 700.0 Z" fill="#3f9c55"/>
<path d="M1160.0 540.0 L1194.4 543.0 L1199.6 551.2 L1194.4 554.4 L1180.8 551.2 L1160.0 553.0 Z" fill="#6fba6c"/>
<path d="M1180.8 551.2 L1194.4 554.4 L1199.6 551.2 L1205.8 563.8 L1210.0 568.0 L1199.6 569.0 L1191.2 563.8 L1183.0 561.7 L1175.0 560.0 Z" fill="#a6d694"/>
<path d="M1184.0 569.0 L1191.2 563.8 L1199.6 569.0 L1210.0 568.0 L1216.2 580.4 L1222.5 586.7 L1218.3 593.0 L1209.0 595.0 L1199.6 595.0 L1191.2 584.6 L1175.0 570.0 Z" fill="#8ccc6f"/>
<path d="M1216.2 580.4 L1222.5 572.0 L1235.0 582.0 L1222.5 595.0 L1218.3 593.0 L1222.5 586.7 Z" fill="#8fd07c"/>
<path d="M1196.5 594.0 L1218.3 593.0 L1222.5 595.0 L1209.0 605.0 L1198.0 603.0 Z" fill="#3d9955"/>
<path d="M1199.6 551.2 L1210.0 549.2 L1222.5 551.2 L1230.8 559.6 L1233.0 568.0 L1239.2 576.2 L1239.2 585.0 L1222.5 585.0 L1210.0 568.0 L1205.8 563.8 Z" fill="#6ab868"/>
<path d="M1196.0 535.0 L1224.6 540.8 L1241.2 547.0 L1255.8 551.2 L1248.5 549.2 L1239.2 551.2 L1230.8 559.6 L1222.5 551.2 L1210.0 549.2 L1199.6 551.2 L1194.4 543.0 Z" fill="#a0d291"/>
<path d="M1228.8 559.6 L1239.2 551.2 L1248.5 549.2 L1255.8 551.2 L1251.7 559.6 L1239.2 565.8 L1230.8 564.8 Z" fill="#4a9a50"/>
<path d="M1230.8 564.8 L1239.2 565.8 L1251.7 559.6 L1255.8 559.6 L1255.8 566.0 L1248.5 572.0 L1242.3 580.0 L1233.0 580.0 Z" fill="#8fcd78"/>
<path d="M1255.8 559.6 L1262.0 558.5 L1268.3 568.0 L1280.8 574.2 L1298.5 572.0 L1302.7 576.2 L1296.0 584.0 L1291.0 590.0 L1275.0 615.0 L1262.0 615.0 L1248.0 585.0 L1242.3 580.0 L1248.5 572.0 L1255.8 566.0 Z" fill="#3d9955"/>
<path d="M1205.0 522.1 L1211.2 517.9 L1224.8 516.9 L1232.0 509.6 L1244.6 506.5 L1253.0 510.6 L1261.2 513.8 L1263.3 517.9 L1273.8 520.0 L1280.0 524.2 L1273.8 528.3 L1266.5 536.7 L1253.0 540.8 L1242.5 543.0 L1230.0 538.8 L1221.7 543.0 L1213.3 538.8 L1207.0 531.5 Z" fill="#a9d89c"/>
<path d="M1242.5 543.0 L1253.0 540.8 L1266.5 536.7 L1262.0 545.0 L1255.8 551.2 L1248.5 549.2 L1241.2 547.0 Z" fill="#93cd7c"/>
<path d="M1282.5 520.0 L1294.6 520.0 L1306.0 516.9 L1319.6 522.1 L1332.5 523.1 L1345.0 518.4 L1347.0 528.0 L1341.9 535.6 L1332.5 538.8 L1316.9 541.9 L1301.2 538.8 L1287.2 532.5 Z" fill="#acd99e"/>
<path d="M1255.8 551.2 L1262.0 545.0 L1266.5 536.7 L1273.8 528.3 L1280.0 524.2 L1282.5 520.0 L1287.2 532.5 L1301.2 538.8 L1316.9 541.9 L1332.5 538.8 L1341.9 535.6 L1347.0 528.0 L1345.0 518.4 L1351.2 510.6 L1357.5 513.8 L1366.9 524.7 L1371.6 531.0 L1366.9 540.3 L1357.0 546.0 L1340.0 548.0 L1360.0 560.0 L1360.0 590.0 L1330.0 595.0 L1322.8 588.0 L1316.6 583.0 L1308.8 585.3 L1305.0 580.0 L1302.7 576.2 L1298.5 572.0 L1280.8 574.2 L1268.3 568.0 L1262.0 558.5 L1255.8 559.6 Z" fill="#93cd76"/>
<path d="M1357.0 546.0 L1366.0 545.0 L1368.0 560.0 L1355.0 560.0 Z" fill="#5fae62"/>
<path d="M1290.0 584.0 L1302.7 576.2 L1305.0 580.0 L1308.8 585.3 L1307.0 594.0 L1305.0 600.0 L1301.0 598.0 L1290.0 590.0 Z" fill="#8fcb76"/>
<path d="M1308.8 585.3 L1316.6 583.0 L1322.8 588.0 L1330.0 595.0 L1330.0 610.0 L1315.0 612.0 L1320.0 630.0 L1300.0 630.0 L1300.0 600.0 L1305.0 600.0 L1307.0 594.0 Z" fill="#3a9653"/>
<path d="M1115.0 488.0 L1134.5 479.7 L1142.3 471.3 L1148.9 463.5 L1157.3 459.6 L1167.0 458.2 L1173.6 462.2 L1160.0 466.0 L1150.0 474.0 L1140.0 484.0 L1136.0 496.0 L1136.5 502.0 L1120.0 502.0 Z" fill="#57ac60"/>
<path d="M1136.0 496.0 L1140.0 484.0 L1150.0 474.0 L1160.0 466.0 L1158.0 477.0 L1150.8 494.0 L1146.0 500.0 L1141.0 510.0 L1137.0 506.0 Z" fill="#6ab76a"/>
<path d="M1160.0 466.0 L1173.6 462.2 L1172.0 470.0 L1175.0 485.0 L1171.0 493.0 L1160.0 493.0 L1156.7 486.2 L1162.5 477.8 Z" fill="#6cb86a"/>
<path d="M1100.0 526.0 L1119.7 520.0 L1126.0 516.6 L1130.0 522.0 L1133.0 530.0 L1135.3 536.9 L1129.0 540.0 L1121.0 540.0 L1112.7 536.9 L1105.0 530.0 Z" fill="#72bb6e"/>
<path d="M1090.0 537.0 L1121.0 540.0 L1125.0 542.0 L1115.8 547.0 L1113.4 552.0 L1105.6 558.0 L1090.0 555.0 Z" fill="#7cc372"/>
<path d="M1126.0 516.6 L1131.0 513.0 L1128.0 500.0 L1136.0 501.0 L1135.8 509.7 L1143.0 511.0 L1142.0 520.0 L1140.0 528.0 L1133.0 530.0 L1130.0 522.0 Z" fill="#4ea55a"/>
<path d="M1143.0 511.0 L1155.4 511.0 L1156.7 505.8 L1158.0 500.6 L1161.9 496.7 L1171.0 493.4 L1170.0 505.0 L1160.0 515.0 L1152.0 520.0 L1142.0 520.0 Z" fill="#6fba6c"/>
<path d="M1160.0 515.0 L1170.0 505.0 L1185.0 510.0 L1192.0 520.0 L1194.0 530.0 L1180.0 532.0 L1168.0 534.0 L1160.0 530.0 L1152.0 525.0 L1152.0 520.0 Z" fill="#a9d89b"/>
<path d="M1140.0 528.0 L1142.0 520.0 L1152.0 520.0 L1152.0 525.0 L1160.0 530.0 L1158.0 536.0 L1146.0 536.0 L1142.0 532.0 Z" fill="#a3d594"/>
<path d="M1133.0 536.9 L1142.0 532.0 L1146.0 536.0 L1144.0 537.5 L1152.0 546.2 L1147.0 550.0 L1143.9 556.0 L1138.0 544.7 L1133.0 540.0 Z" fill="#4aa35a"/>
<path d="M1146.0 536.0 L1158.0 536.0 L1168.0 534.0 L1168.1 540.0 L1166.0 544.7 L1163.4 544.7 L1157.2 552.5 L1154.0 544.7 L1146.2 540.0 Z" fill="#5db162"/>
<path d="M1154.0 544.7 L1163.4 544.7 L1162.0 552.0 L1156.0 556.0 Z" fill="#79c070"/>
<line x1="851" y1="459" x2="851" y2="491"/>
</g>
<path d="M1168.1 533.8 L1172.8 529.8 L1179.8 532.2 L1184.5 530.6 L1190.8 533.8 L1193.9 540.8 L1190.0 543.9 L1179.8 543.1 L1172.8 543.9 L1168.1 540.0 Z" fill="#ffffff"/>
<path d="M1205.8 531.5 L1214.2 530.4 L1209.0 536.7 L1215.2 544.0 L1216.2 551.2 L1209.0 552.3 L1206.9 546.0 L1203.8 537.7 Z" fill="#ffffff"/>
<path d="M1133.9 501.9 L1136.5 500.6 L1138.4 507.1 L1142.3 504.5 L1146.2 499.3 L1150.8 494.0 L1148.9 487.6 L1154.0 482.3 L1158.0 477.1 L1162.5 477.8 L1156.7 486.2 L1157.3 491.5 L1164.5 494.0 L1171.0 493.4 L1161.9 496.7 L1158.0 500.6 L1156.7 505.8 L1155.4 511.0 L1152.5 510.3 L1143.0 511.0 L1135.8 509.7 Z" fill="#ffffff"/>
<path d="M948.0 524.1 L954.7 521.6 L959.6 523.3 L958.0 526.6 L953.0 527.4 Z" fill="#ffffff"/>
<path d="M954.7 528.3 L958.0 529.1 L957.2 538.2 L955.1 537.4 L954.7 531.6 Z" fill="#ffffff"/>
<path d="M960.5 529.1 L965.5 530.0 L968.8 534.1 L964.6 535.7 L962.1 533.3 Z" fill="#ffffff"/>
<path d="M963.0 539.0 L970.4 535.0 L974.6 534.1 L972.9 536.6 L966.3 539.9 Z" fill="#ffffff"/>
<path d="M1224.6 531.5 L1228.8 532.0 L1228.0 535.6 L1225.0 535.0 Z" fill="#ffffff"/>
<circle cx="1179.2" cy="629.2" r="2.4" fill="#ffffff"/>
<g fill="none" stroke-linecap="round">
<path d="M1394 537 L1413 521" stroke="#9fd39a" stroke-width="0.9" stroke-dasharray="2 2"/>
<path d="M1408 640 L1416 635.5" stroke="#4ea55a" stroke-width="1.3"/>
<path d="M1419 638 L1438 652" stroke="#7cc37a" stroke-width="1" stroke-dasharray="3 2.5"/>
<path d="M1443 667 L1447 670" stroke="#7cc37a" stroke-width="1.1"/>
<path d="M1448 659.5 L1451 660" stroke="#7cc37a" stroke-width="1"/>
<path d="M1352 604 L1356 610" stroke="#9fd39a" stroke-width="0.9" stroke-dasharray="2 2"/>
</g>
</svg>
<div class="t" style="left:567.3px;top:38.3px;font-size:23px;font-weight:400;color:#f4f4f7;-webkit-text-stroke:0.3px #f4f4f7;">Overview</div>
<div class="t" style="left:727.3px;top:38.5px;font-size:23px;font-weight:400;color:#9c9ea8;-webkit-text-stroke:0.3px #9c9ea8;">Links</div>
<div class="t" style="left:835.3px;top:38.5px;font-size:23px;font-weight:400;color:#9c9ea8;-webkit-text-stroke:0.3px #9c9ea8;">Audience</div>
<div class="t" style="left:111.2px;top:26.2px;font-size:37px;font-weight:400;color:#ffffff;letter-spacing:0.5px;-webkit-text-stroke:1.1px #ffffff;">linktree</div>
<div class="t" style="left:244.5px;top:34.1px;font-size:18px;font-weight:700;color:#ffffff;">PRO</div>
<div class="t" style="left:378.0px;top:157.8px;font-size:23.6px;font-weight:400;color:#1d2130;-webkit-text-stroke:0.3px #1d2130;">Total Clicks</div>
<div class="t" style="left:591.6px;top:155.1px;font-size:37px;font-weight:400;color:#1d2130;letter-spacing:0.8px;-webkit-text-stroke:0.6px #1d2130;">7,630</div>
<div class="t" style="left:810.0px;top:158.2px;font-size:23.4px;font-weight:400;color:#1d2130;-webkit-text-stroke:0.3px #1d2130;">Unique Visitors</div>
<div class="t" style="left:1016.4px;top:155.2px;font-size:37px;font-weight:400;color:#1d2130;letter-spacing:-1.1px;-webkit-text-stroke:0.6px #1d2130;">5,210</div>
<div class="t" style="left:98.9px;top:280.8px;font-size:26.6px;font-weight:700;color:#1d2130;">Link Clicks</div>
<div class="t" style="left:100.4px;top:326.6px;font-size:20.8px;font-weight:400;color:#262a36;-webkit-text-stroke:0.3px #262a36;">Clicks per link</div>
<div class="t" style="left:111.2px;top:428.2px;font-size:20.7px;font-weight:400;color:#1d2130;-webkit-text-stroke:0.3px #1d2130;">Website</div>
<div class="t" style="left:102.9px;top:500.5px;font-size:21.2px;font-weight:400;color:#1d2130;-webkit-text-stroke:0.3px #1d2130;">Instagram</div>
<div class="t" style="left:84.3px;top:574.9px;font-size:17.4px;font-weight:400;color:#1d2130;-webkit-text-stroke:0.3px #1d2130;">YouTube Video</div>
<div class="t" style="left:110.4px;top:643.4px;font-size:20.3px;font-weight:400;color:#1d2130;-webkit-text-stroke:0.3px #1d2130;">Blog Post</div>
<div class="t" style="left:102.5px;top:713.2px;font-size:19.6px;font-weight:400;color:#1d2130;-webkit-text-stroke:0.3px #1d2130;">Shop Page</div>
<div class="t" style="left:591.3px;top:426.3px;font-size:21.9px;font-weight:400;color:#1d2130;-webkit-text-stroke:0.3px #1d2130;">2.5k</div>
<div class="t" style="left:458.2px;top:499.7px;font-size:21.2px;font-weight:400;color:#1d2130;-webkit-text-stroke:0.3px #1d2130;">1.8k</div>
<div class="t" style="left:389.0px;top:570.2px;font-size:21.0px;font-weight:400;color:#1d2130;-webkit-text-stroke:0.3px #1d2130;">1.2k</div>
<div class="t" style="left:337.6px;top:637.8px;font-size:24.2px;font-weight:400;color:#1d2130;-webkit-text-stroke:0.3px #1d2130;">980</div>
<div class="t" style="left:312.0px;top:709.1px;font-size:23.2px;font-weight:400;color:#1d2130;-webkit-text-stroke:0.3px #1d2130;">750</div>
<div class="t" style="left:212.3px;top:776.8px;font-size:18px;font-weight:400;color:#6b6f7e;-webkit-text-stroke:0.3px #6b6f7e;">0</div>
<div class="t" style="left:334.6px;top:776.8px;font-size:18px;font-weight:400;color:#6b6f7e;-webkit-text-stroke:0.3px #6b6f7e;">500</div>
<div class="t" style="left:463.6px;top:776.8px;font-size:18px;font-weight:400;color:#6b6f7e;-webkit-text-stroke:0.3px #6b6f7e;">1k</div>
<div class="t" style="left:546.9px;top:776.8px;font-size:18px;font-weight:400;color:#6b6f7e;-webkit-text-stroke:0.3px #6b6f7e;">1.5k</div>
<div class="t" style="left:630.2px;top:776.8px;font-size:18px;font-weight:400;color:#6b6f7e;-webkit-text-stroke:0.3px #6b6f7e;">2k</div>
<div class="t" style="left:686.2px;top:776.8px;font-size:18px;font-weight:400;color:#6b6f7e;-webkit-text-stroke:0.3px #6b6f7e;">2.5k</div>
<div class="t" style="left:810.0px;top:281.1px;font-size:26.3px;font-weight:700;color:#1d2130;">Top Locations</div>
<div class="t" style="left:810.0px;top:327.7px;font-size:19.7px;font-weight:400;color:#3a3f4d;-webkit-text-stroke:0.3px #3a3f4d;">Where your visitors are from</div>
<div class="t" style="left:814.4px;top:739.4px;font-size:21.6px;font-weight:400;color:#1d2130;letter-spacing:0.55px;-webkit-text-stroke:0.75px #1d2130;">Top Countries</div>
<div class="t" style="left:813.4px;top:777.2px;font-size:21.6px;font-weight:400;color:#1d2130;-webkit-text-stroke:0.45px #1d2130;">1.</div>
<div class="t" style="left:842.4px;top:776.1px;font-size:22.9px;font-weight:400;color:#656a7b;-webkit-text-stroke:0.3px #656a7b;">Indonesia</div>
<div class="t" style="left:987.5px;top:776.7px;font-size:22.2px;font-weight:400;color:#1d2130;letter-spacing:0.2px;-webkit-text-stroke:0.6px #1d2130;">3.4k</div>
<div class="t" style="left:813.4px;top:810.2px;font-size:21.6px;font-weight:400;color:#1d2130;-webkit-text-stroke:0.45px #1d2130;">2.</div>
<div class="t" style="left:842.3px;top:810.6px;font-size:21.2px;font-weight:400;color:#656a7b;-webkit-text-stroke:0.3px #656a7b;">United States</div>
<div class="t" style="left:988.4px;top:811.0px;font-size:20.7px;font-weight:400;color:#1d2130;letter-spacing:0.2px;-webkit-text-stroke:0.6px #1d2130;">1.2k</div>
<div class="t" style="left:813.4px;top:844.2px;font-size:21.6px;font-weight:400;color:#1d2130;-webkit-text-stroke:0.45px #1d2130;">3.</div>
<div class="t" style="left:842.3px;top:844.6px;font-size:21.2px;font-weight:400;color:#1d2130;-webkit-text-stroke:0.3px #1d2130;">Brazil</div>
<div class="t" style="left:990.0px;top:843.6px;font-size:22.3px;font-weight:400;color:#1d2130;letter-spacing:0.2px;-webkit-text-stroke:0.6px #1d2130;">850</div>
<div class="t" style="left:813.4px;top:877.7px;font-size:21.6px;font-weight:400;color:#1d2130;-webkit-text-stroke:0.45px #1d2130;">4.</div>
<div class="t" style="left:841.4px;top:879.4px;font-size:19.6px;font-weight:400;color:#1d2130;-webkit-text-stroke:0.3px #1d2130;">United Kingdom</div>
<div class="t" style="left:993.6px;top:877.2px;font-size:22.2px;font-weight:400;color:#1d2130;letter-spacing:0.2px;-webkit-text-stroke:0.6px #1d2130;">620</div>
<div class="t" style="left:813.4px;top:911.7px;font-size:21.6px;font-weight:400;color:#1d2130;-webkit-text-stroke:0.45px #1d2130;">5.</div>
<div class="t" style="left:844.3px;top:911.9px;font-size:21.4px;font-weight:400;color:#1d2130;-webkit-text-stroke:0.3px #1d2130;">Australia</div>
<div class="t" style="left:990.0px;top:911.7px;font-size:21.6px;font-weight:400;color:#1d2130;letter-spacing:0.2px;-webkit-text-stroke:0.6px #1d2130;">410</div>
</body></html>
